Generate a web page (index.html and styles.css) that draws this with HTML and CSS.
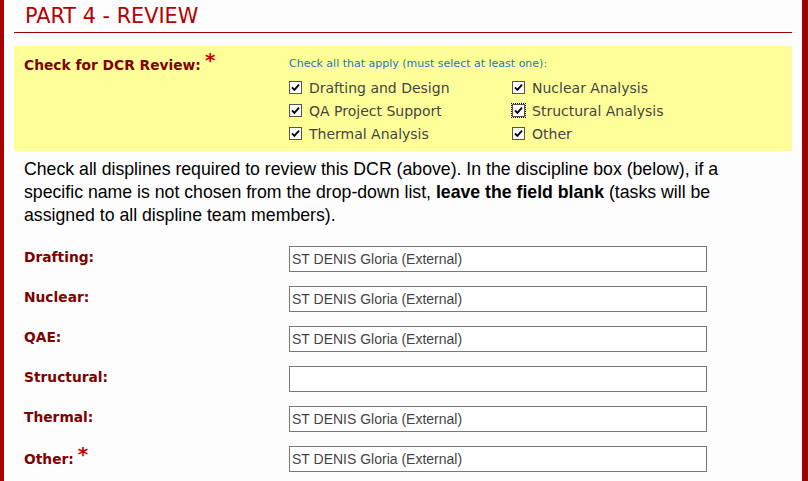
FILE: index.html
```html
<!DOCTYPE html>
<html lang="en">
<head>
    <meta charset="UTF-8">
    <title>Part 4 - Review</title>
    <link rel="stylesheet" href="styles.css">
</head>
<body>
    <div class="page">
        <h1>PART 4 - REVIEW</h1>

        <div class="review-box">
            <div class="field-label">Check for DCR Review:<span class="req">*</span></div>
            <div class="review-options">
                <div class="hint">Check all that apply (must select at least one):</div>
                <div class="check-grid">
                    <label class="check"><span class="box"><svg viewBox="0 0 11 11"><path d="M2 5.3 L4.4 7.8 L9 2.6"/></svg></span>Drafting and Design</label>
                    <label class="check"><span class="box"><svg viewBox="0 0 11 11"><path d="M2 5.3 L4.4 7.8 L9 2.6"/></svg></span>Nuclear Analysis</label>
                    <label class="check"><span class="box"><svg viewBox="0 0 11 11"><path d="M2 5.3 L4.4 7.8 L9 2.6"/></svg></span>QA Project Support</label>
                    <label class="check"><span class="box focused"><svg viewBox="0 0 11 11"><path d="M2 5.3 L4.4 7.8 L9 2.6"/></svg></span>Structural Analysis</label>
                    <label class="check"><span class="box"><svg viewBox="0 0 11 11"><path d="M2 5.3 L4.4 7.8 L9 2.6"/></svg></span>Thermal Analysis</label>
                    <label class="check"><span class="box"><svg viewBox="0 0 11 11"><path d="M2 5.3 L4.4 7.8 L9 2.6"/></svg></span>Other</label>
                </div>
            </div>
        </div>

        <p class="note">Check all displines required to review this DCR (above). In the discipline box (below), if a specific name is not chosen from the drop-down list, <strong>leave the field blank</strong> (tasks will be assigned to all displine team members).</p>

        <div class="form-rows">
            <div class="form-row">
                <div class="field-label">Drafting:</div>
                <input class="name-input" type="text" value="ST DENIS Gloria (External)">
            </div>
            <div class="form-row">
                <div class="field-label">Nuclear:</div>
                <input class="name-input" type="text" value="ST DENIS Gloria (External)">
            </div>
            <div class="form-row">
                <div class="field-label">QAE:</div>
                <input class="name-input" type="text" value="ST DENIS Gloria (External)">
            </div>
            <div class="form-row">
                <div class="field-label">Structural:</div>
                <input class="name-input" type="text" value="">
            </div>
            <div class="form-row">
                <div class="field-label">Thermal:</div>
                <input class="name-input" type="text" value="ST DENIS Gloria (External)">
            </div>
            <div class="form-row">
                <div class="field-label">Other:<span class="req">*</span></div>
                <input class="name-input" type="text" value="ST DENIS Gloria (External)">
            </div>
        </div>
    </div>
</body>
</html>
```

FILE: styles.css
```css
body {
    margin: 0;
    padding: 0;
    background-color: #fdfdfd;
    font-family: "DejaVu Sans", Verdana, sans-serif;
    color: #333;
}
.page {
    border-left: 4px solid #a80000;
    border-right: 6px solid #a00000;
    padding: 0 10px;
    min-height: 100vh;
    box-sizing: border-box;
}
h1 {
    margin: 0;
    padding: 4px 0 4px 11px;
    font-size: 20.8px;
    line-height: 24px;
    font-weight: normal;
    color: #b40000;
    border-bottom: 1px solid #a00000;
}
.review-box {
    margin-top: 13px;
    background: #ffff99;
    padding: 9px 10px 6px 10px;
    display: grid;
    grid-template-columns: 265px 1fr;
}
.field-label {
    font-size: 13.8px;
    line-height: 16px;
    font-weight: bold;
    color: #800000;
}
.req {
    color: #cc0000;
    font-size: 20px;
    line-height: 16px;
    margin-left: 4px;
    position: relative;
    top: -3px;
}
.hint {
    font-size: 11px;
    line-height: 16px;
    color: #1a73c8;
    padding-top: 1px;
}
.check-grid {
    margin-top: 4px;
    display: grid;
    grid-template-columns: 223px auto;
}
.check {
    display: flex;
    align-items: center;
    height: 23px;
    font-size: 14px;
    color: #444;
}
.box {
    width: 11px;
    height: 11px;
    border: 1px solid #555;
    background: #fff;
    margin-right: 7px;
    display: inline-block;
}
.box svg {
    width: 11px;
    height: 11px;
    display: block;
}
.box path {
    fill: none;
    stroke: #000;
    stroke-width: 1.8;
}
.box.focused {
    outline: 1px dotted #000;
    outline-offset: 0;
}
.note {
    margin: 7px 0 0 0;
    padding: 0 10px;
    max-width: 720px;
    font-family: "Liberation Sans", Arial, sans-serif;
    font-size: 17.7px;
    line-height: 23px;
    color: #000;
}
.form-rows {
    margin-top: 19px;
    padding-left: 10px;
}
.form-row {
    display: grid;
    grid-template-columns: 265px 418px;
    align-items: start;
    margin-bottom: 14px;
}
.form-row .field-label {
    padding-top: 3px;
}
.name-input {
    width: 418px;
    height: 26px;
    box-sizing: border-box;
    margin: 0;
    border: 1px solid #767676;
    background: #fff;
    padding: 0 2px;
    font-family: "Liberation Sans", Arial, sans-serif;
    font-size: 14px;
    color: #444;
}
```
